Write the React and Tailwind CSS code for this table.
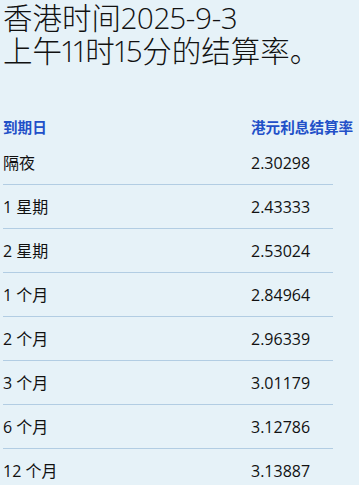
import React from "react";

const rows = [
  ["隔夜", "2.30298"],
  ["1 星期", "2.43333"],
  ["2 星期", "2.53024"],
  ["1 个月", "2.84964"],
  ["2 个月", "2.96339"],
  ["3 个月", "3.01179"],
  ["6 个月", "3.12786"],
  ["12 个月", "3.13887"],
];

export default function App() {
  return (
    <div
      className="w-[359px] h-[485px] overflow-hidden bg-[#e6f2f8] text-[#111] pl-[3px]"
      style={{ fontFamily: '"Open Sans", "Noto Sans CJK SC", sans-serif' }}
    >
      <h1 className="text-[29.5px] leading-[33px] font-light pt-[1px] [font-variant-numeric:proportional-nums]">
        香港时间2025-9-3
        <br />
        上午11时15分的结算率。
      </h1>
      <div className="mt-[48px] w-[330px]">
        <div className="flex h-[26px] items-center text-[14.6px] font-bold text-[#2250c8]">
          <div className="w-[248px] shrink-0">到期日</div>
          <div className="whitespace-nowrap">港元利息结算率</div>
        </div>
        {rows.map(([a, b], i) => (
          <div
            key={i}
            className={
              "flex h-[44px] items-center text-[16px] " +
              (i < rows.length - 1 ? "border-b border-[#b2cde3]" : "")
            }
          >
            <div className="w-[248px] shrink-0">{a}</div>
            <div>{b}</div>
          </div>
        ))}
      </div>
    </div>
  );
}
